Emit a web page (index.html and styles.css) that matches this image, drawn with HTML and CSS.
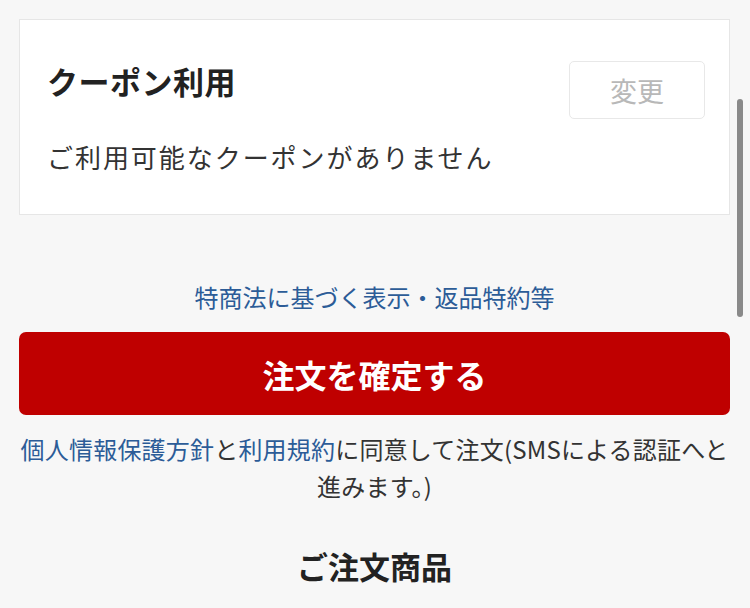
FILE: index.html
```html
<!DOCTYPE html>
<html lang="ja">
<head>
<meta charset="utf-8">
<link rel="stylesheet" href="styles.css">
</head>
<body>
<div class="page">
  <section class="card">
    <div class="card-head">
      <h2 class="card-title">クーポン利用</h2>
      <button class="change-btn" type="button">変更</button>
    </div>
    <p class="card-note">ご利用可能なクーポンがありません</p>
  </section>
  <p class="law-link"><a href="#">特商法に基づく表示・返品特約等</a></p>
  <button class="confirm-btn" type="button">注文を確定する</button>
  <p class="agree"><a href="#">個人情報保護方針</a>と<a href="#">利用規約</a>に同意して注文(SMSによる認証へと進みます。)</p>
  <h2 class="section-title">ご注文商品</h2>
</div>
<div class="scroll-indicator"></div>
</body>
</html>
```

FILE: styles.css
```css
html, body {
  margin: 0;
  padding: 0;
  background: #f7f7f7;
  height: 100%;
  overflow: hidden;
}
body {
  font-family: "Noto Sans CJK JP", "Noto Sans", sans-serif;
  color: #333;
}
.page {
  padding: 19px 20px 0 19px;
}
.card {
  background: #fff;
  border: 1px solid #e6e6e6;
  padding: 39px 24px 38px 27px;
}
.card-head {
  display: flex;
  justify-content: space-between;
  align-items: flex-start;
}
.card-title {
  margin: 0;
  font-size: 31px;
  font-weight: 700;
  line-height: 44px;
  letter-spacing: 0.5px;
  color: #222;
}
.change-btn {
  width: 136px;
  height: 58px;
  margin-top: 2px;
  background: #fff;
  border: 1.5px solid #e8e8e8;
  border-radius: 5px;
  font-family: inherit;
  font-size: 27px;
  color: #b8b8b8;
  padding: 0;
}
.card-note {
  margin: 19px 0 0;
  font-size: 26px;
  line-height: 38px;
  letter-spacing: 1.95px;
  color: #333;
}
.law-link {
  margin: 64px 0 0;
  text-align: center;
  font-size: 24px;
  line-height: 36px;
}
a {
  color: #2c5c97;
  text-decoration: none;
}
.confirm-btn {
  display: block;
  width: 100%;
  height: 83px;
  margin-top: 17px;
  background: #bf0000;
  border: none;
  border-radius: 7px;
  color: #fff;
  font-family: inherit;
  font-size: 32px;
  font-weight: 700;
  padding: 0;
}
.agree {
  margin: 15px 0 0;
  text-align: center;
  font-size: 24px;
  line-height: 37px;
  letter-spacing: 0.2px;
  color: #333;
}
.section-title {
  margin: 40px 0 0;
  text-align: center;
  font-size: 31px;
  font-weight: 700;
  line-height: 44px;
  color: #222;
}
.scroll-indicator {
  position: absolute;
  left: 737px;
  top: 99px;
  width: 6px;
  height: 218px;
  border-radius: 3px;
  background: #8a8a8a;
}
```
